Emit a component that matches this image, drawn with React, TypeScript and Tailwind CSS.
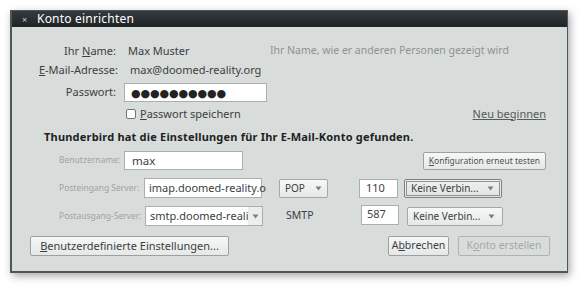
import React from "react";

const font = { fontFamily: '"Noto Sans", "DejaVu Sans", sans-serif' };

function Arrow({ className = "" }: { className?: string }) {
  return (
    <svg width="7" height="5" viewBox="0 0 7 5" className={className}>
      <path d="M0.5 0.5 L6.5 0.5 L3.5 4.5 Z" fill="#7a7f80" />
    </svg>
  );
}

export default function App() {
  return (
    <div className="w-[586px] h-[289px] bg-white pt-[10px] pl-[10px]" style={font}>
      <div className="w-[558px] h-[263px] flex flex-col bg-[#d8dcdb] border border-[#4f5656] border-l-2 border-b-2 shadow-[2px_3px_8px_rgba(0,0,0,0.35)]">
        {/* title bar */}
        <div className="h-[16px] flex items-center bg-gradient-to-b from-[#343a3d] to-[#1f2427] text-white">
          <span className="w-[25px] text-center text-[9px] text-[#c8cccc] leading-none">×</span>
          <span className="text-[12px] leading-none tracking-[0.2px]">Konto einrichten</span>
        </div>

        <div className="flex flex-col text-[#3a3f40] text-[11px]">
          {/* Name */}
          <div className="flex items-center h-[18px] mt-[15px]">
            <div className="w-[104px] text-right">Ihr <u>N</u>ame:</div>
            <div className="ml-[12px] w-[142px]">Max Muster</div>
            <div className="text-[10.5px] text-[#8e9394]">Ihr Name, wie er anderen Personen gezeigt wird</div>
          </div>
          {/* Email */}
          <div className="flex items-center h-[18px] mt-[1px]">
            <div className="w-[106px] text-right"><u>E</u>-Mail-Adresse:</div>
            <div className="ml-[12px]">max@doomed-reality.org</div>
          </div>
          {/* Password */}
          <div className="flex items-center h-[19px] mt-[4px]">
            <div className="w-[104px] text-right">Passwort:</div>
            <div className="ml-[8px] w-[143px] h-[19px] bg-white border border-[#a9aeae] flex items-center pl-[6px] text-[11px] tracking-[-0.1px] leading-none text-[#222]">
              ●●●●●●●●●●
            </div>
          </div>
          {/* Checkbox row */}
          <div className="flex items-center h-[16px] mt-[4px]">
            <div className="w-[114px]" />
            <div className="w-[10px] h-[10px] bg-white border border-[#6e7374] rounded-[2px]" />
            <div className="ml-[4px]"><u>P</u>asswort speichern</div>
            <div className="ml-auto mr-[21px] text-[#555a5b] underline">Neu beginnen</div>
          </div>
          {/* Bold */}
          <div className="flex items-center h-[16px] mt-[7px] pl-[32px] font-bold text-[11px] text-[#1e2223] tracking-[0.2px]">
            Thunderbird hat die Einstellungen für Ihr E-Mail-Konto gefunden.
          </div>
          {/* Benutzername */}
          <div className="flex items-center h-[19px] mt-[6px]">
            <div className="w-[47px]" />
            <div className="w-[65px] text-[8.5px] text-[#9ea3a3]">Benutzername:</div>
            <div className="w-[119px] h-[19px] bg-white border border-[#a9aeae] flex items-center pl-[7px] text-[11.5px]">max</div>
            <div className="ml-auto mr-[21px] h-[18px] px-[5px] flex items-center bg-gradient-to-b from-[#f6f7f7] to-[#e6e8e8] border border-[#9ba0a0] rounded-[2px] text-[8.5px] text-[#4b5051] mt-[1px]">
              <u>K</u>onfiguration erneut testen
            </div>
          </div>
          {/* Posteingang */}
          <div className="flex items-center h-[20px] mt-[8px]">
            <div className="w-[47px]" />
            <div className="w-[85px] text-[8.5px] text-[#9ea3a3]">Posteingang Server:</div>
            <div className="w-[118px] h-[20px] bg-white border border-[#a9aeae] flex items-center pl-[4px] text-[11px] whitespace-nowrap">imap.doomed-reality.o</div>
            <div className="ml-[17px] w-[49px] h-[19px] bg-gradient-to-b from-[#f6f7f7] to-[#e6e8e8] border border-[#a3a8a8] rounded-[2px] flex items-center pl-[5px] text-[10px]">
              POP<Arrow className="ml-[10px]" />
            </div>
            <div className="ml-[31px] w-[39px] h-[19px] bg-white border border-[#a9aeae] flex items-center pl-[6px] text-[11px]">110</div>
            <div className="ml-[6px] w-[98px] h-[19px] bg-gradient-to-b from-[#eef0f0] to-[#e2e4e4] border border-[#7c8282] rounded-[2px] flex items-center p-[1px]">
              <div className="w-full h-full border border-[#8d9292] flex items-center pl-[4px] text-[10px]">
                Keine Verbin...<Arrow className="ml-[9px]" />
              </div>
            </div>
          </div>
          {/* Postausgang */}
          <div className="flex items-center h-[20px] mt-[8px]">
            <div className="w-[47px]" />
            <div className="w-[86px] text-[8.5px] text-[#9ea3a3]">Postausgang-Server:</div>
            <div className="w-[118px] h-[20px] bg-white border border-[#a9aeae] flex items-center text-[11px]">
              <div className="flex-1 pl-[4px] whitespace-nowrap">smtp.doomed-reali</div>
              <div className="w-[17px] h-full bg-[#eceeee] flex items-center justify-center"><Arrow /></div>
            </div>
            <div className="ml-[23px] w-[75px] text-[10.5px]">SMTP</div>
            <div className="w-[38px] h-[20px] bg-white border border-[#a9aeae] flex items-start pl-[5px] text-[11px] -mt-[2px]">587</div>
            <div className="ml-[8px] w-[96px] h-[19px] bg-gradient-to-b from-[#f6f7f7] to-[#e6e8e8] border border-[#a3a8a8] rounded-[2px] flex items-center pl-[5px] text-[10px]">
              Keine Verbin...<Arrow className="ml-[8px]" />
            </div>
          </div>
          {/* Buttons */}
          <div className="flex items-center h-[20px] mt-[10px]">
            <div className="ml-[18px] w-[199px] h-[20px] bg-gradient-to-b from-[#f6f7f7] to-[#e6e8e8] border border-[#9ba0a0] rounded-[2px] flex items-center justify-center text-[11px]">
              <span><u>B</u>enutzerdefinierte Einstellungen...</span>
            </div>
            <div className="ml-auto w-[61px] h-[20px] bg-gradient-to-b from-[#f6f7f7] to-[#e6e8e8] border border-[#9ba0a0] rounded-[2px] flex items-center justify-center text-[10.5px]">
              <span>A<u>b</u>brechen</span>
            </div>
            <div className="ml-[9px] mr-[17px] w-[92px] h-[20px] border border-[#aeb2b2] rounded-[2px] flex items-center justify-center text-[10.5px] text-[#a4a8a8]">
              <span>K<u>o</u>nto erstellen</span>
            </div>
          </div>
        </div>
      </div>
    </div>
  );
}
